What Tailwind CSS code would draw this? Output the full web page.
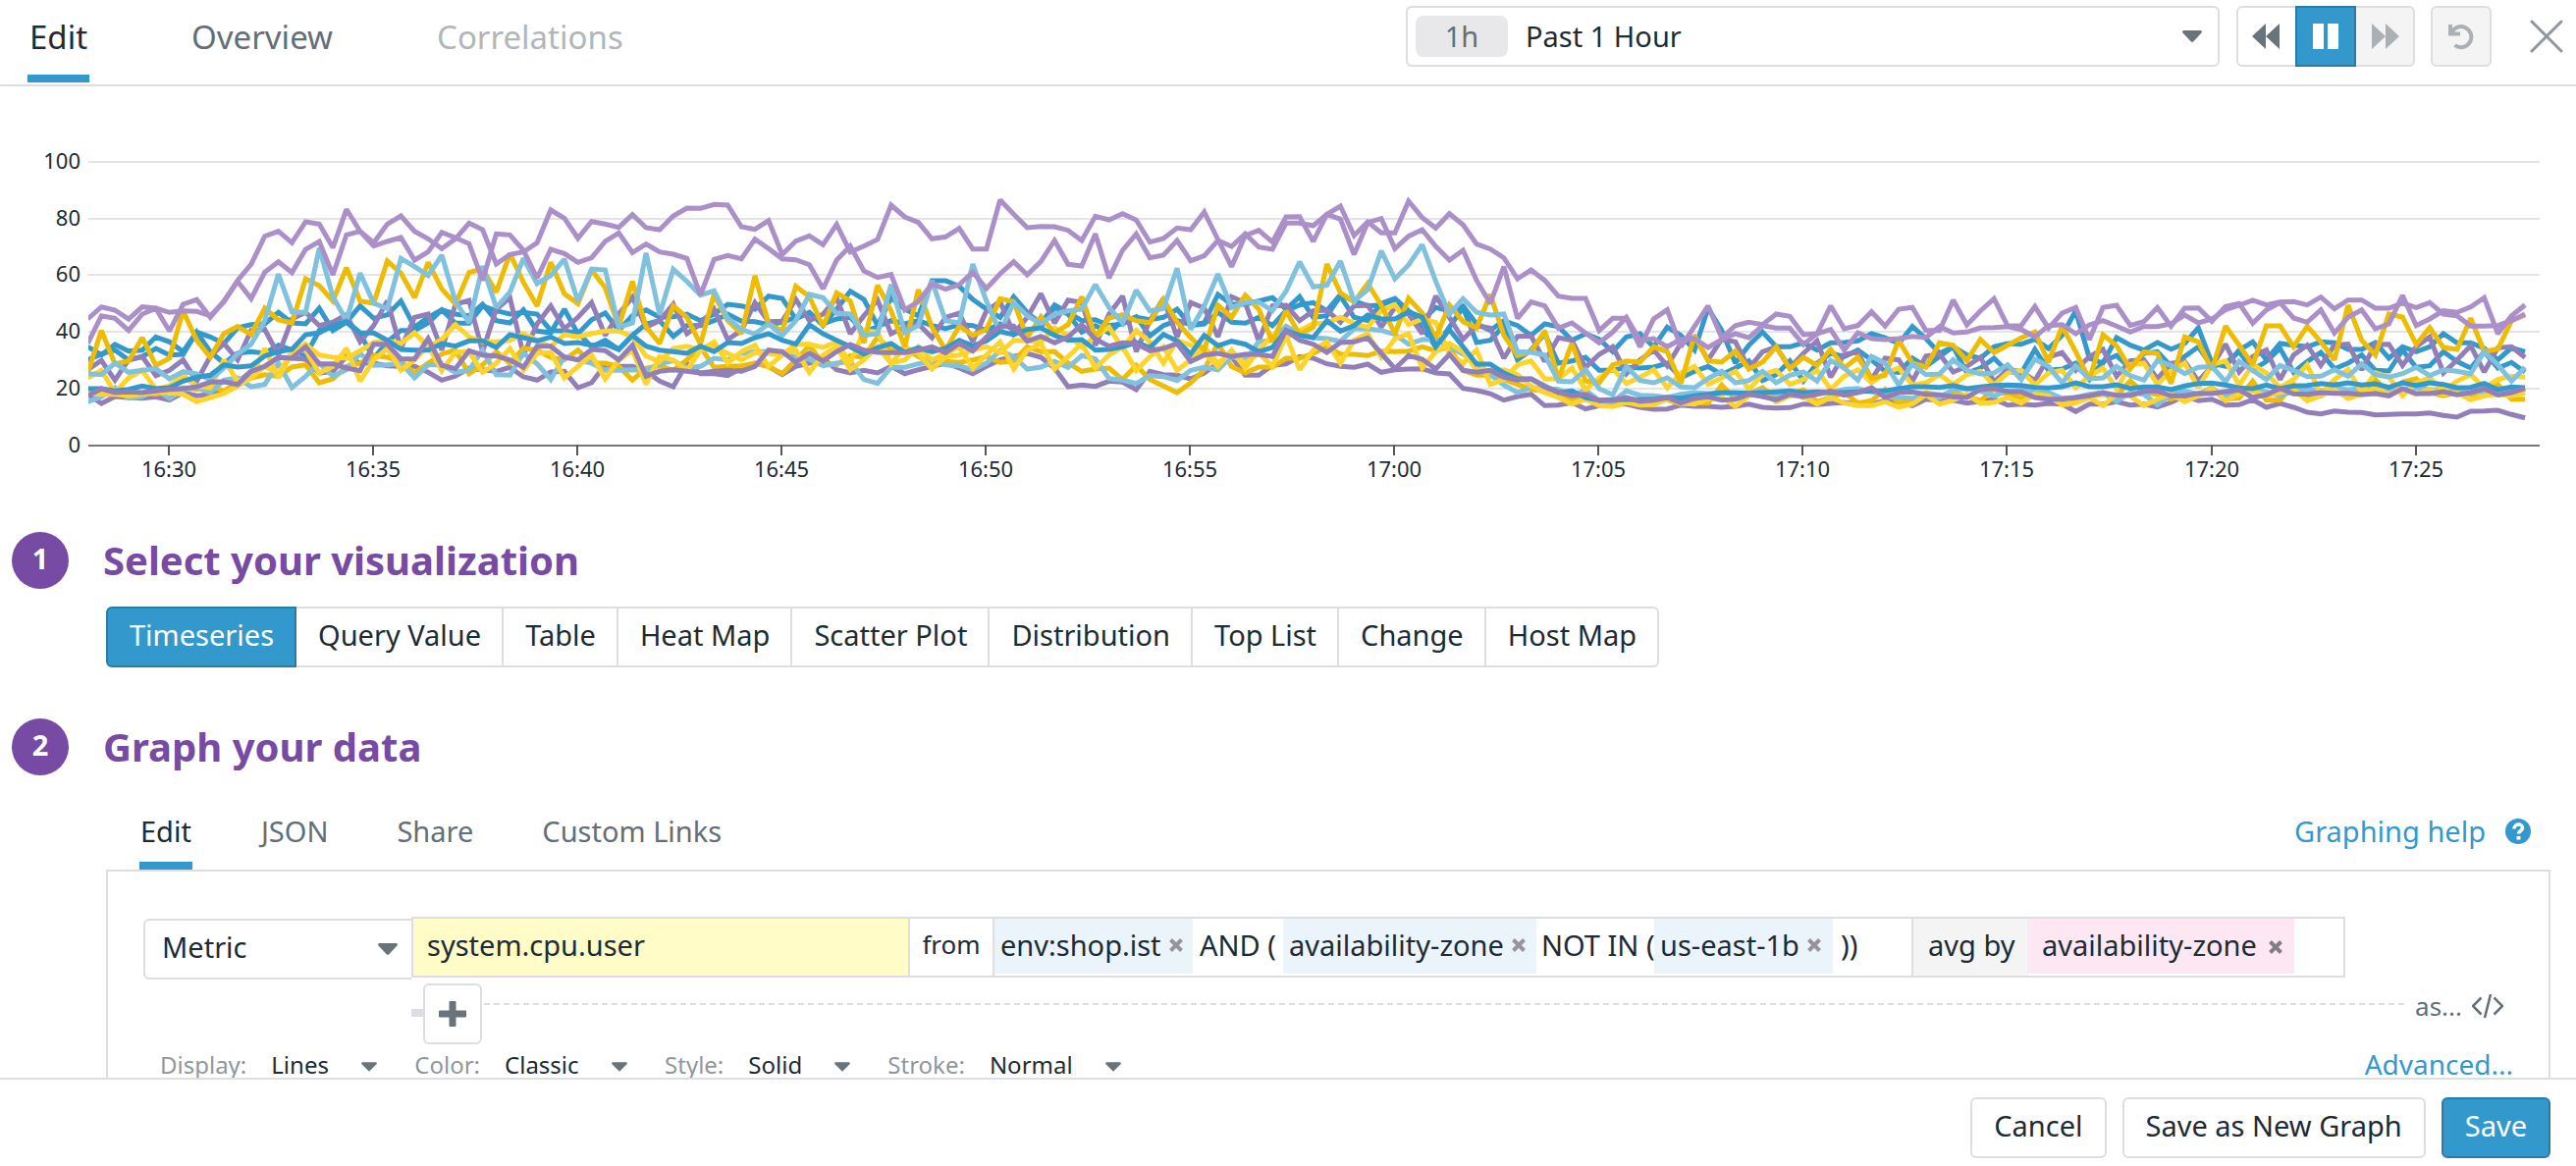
<!DOCTYPE html>
<html lang="en">
<head>
<meta charset="utf-8">
<meta name="viewport" content="width=device-width, initial-scale=1">
<title>Graph editor</title>
<script src="https://cdn.jsdelivr.net/npm/@tailwindcss/browser@4"></script>
</head>
<body class="flex h-screen flex-col overflow-hidden bg-white font-['Noto_Sans',sans-serif] text-[29px] leading-[38px] text-[#1c2b34]">

<header class="flex h-[88px] shrink-0 items-start justify-between border-b-2 border-[#dddde3] pr-[13px] pl-7">
  <nav class="flex gap-[102px] text-[33px] leading-[44px]" aria-label="Editor views">
    <a href="#edit" class="flex h-[84px] flex-col justify-end border-b-8 border-[#3399cc] px-0.5 pb-4">Edit</a>
    <a href="#overview" class="flex h-[84px] flex-col justify-end border-b-8 border-transparent px-0.5 pb-4 text-[#636e76]">Overview</a>
    <a href="#correlations" class="flex h-[84px] flex-col justify-end border-b-8 border-transparent px-0.5 pb-4 text-[#b1b6b9]">Correlations</a>
  </nav>
  <div class="flex items-center pt-1.5">
    <label class="flex h-[62px] w-[829px] items-center rounded-md border-2 border-[#dddde3] pr-4 pl-2">
      <span class="flex h-[42px] w-[94px] items-center justify-center rounded-lg bg-[#e8e8ea] text-[#636e76]">1h</span>
      <select aria-label="Time range" class="ml-[18px] flex-1 appearance-none bg-transparent"><option>Past 1 Hour</option></select>
      <svg class="h-3 w-5" viewBox="0 0 20 12" fill="#69737a"><path d="M1.500 0h17a1.500 1.500 0 0 1 1 2.500l-8 8.500a2 2 0 0 1-3 0l-8-8.500A1.500 1.500 0 0 1 1.500 0z"/></svg>
    </label>
    <div class="ml-[17px] flex h-[62px]">
      <button aria-label="Rewind" class="flex w-[60px] items-center justify-center rounded-l-md border-2 border-r-0 border-[#dddde3] pr-0.5"><svg class="h-[26px] w-7" viewBox="0 0 28 26" fill="#69737a"><path d="M14 0v26L0 13zM28 0v26L14 13z"/></svg></button>
      <button aria-label="Pause" class="flex w-[62px] items-center justify-center border-2 border-[#2a7ba6] bg-[#3399cc]"><svg class="h-[26px] w-[26px]" viewBox="0 0 26 26" fill="#fff"><path d="M0 0h11v26H0zM15 0h11v26H15z"/></svg></button>
      <button aria-label="Fast forward" disabled class="flex w-[60px] items-center justify-center rounded-r-md border-2 border-l-0 border-[#dddde3] bg-[#f4f4f5] pl-0.5"><svg class="h-[26px] w-7" viewBox="0 0 28 26" fill="#abb0b4"><path d="M0 0v26l14-13zM14 0v26l14-13z"/></svg></button>
    </div>
    <button aria-label="Reset" disabled class="ml-4 flex h-[62px] w-[62px] items-center justify-center rounded-md border-2 border-[#dddde3] bg-[#f4f4f5]"><svg class="h-7 w-7" viewBox="0 0 28 28" fill="none" stroke="#abb0b4" stroke-width="4"><path d="M3 2v9.500h10M4 11a10.500 10.500 0 1 1 3.500 12"/></svg></button>
    <button aria-label="Close" class="ml-[39px]"><svg class="h-[34px] w-[34px]" viewBox="0 0 34 34" fill="none" stroke="#8f979d" stroke-width="3" stroke-linecap="round"><path d="M2 2l30 30M32 2L2 32"/></svg></button>
  </div>
</header>

<main class="min-h-0 flex-1 overflow-hidden">
  <svg id="chart" class="block h-auto w-full" viewBox="0 88 2624 412" role="img" aria-label="system.cpu.user by availability-zone" font-size="22" fill="#1c2b34">
    <defs><clipPath id="plot"><path d="M90 100h2500v360H90z"/></clipPath></defs>
    <g id="grid" stroke-width="2"></g>
    <g id="lines" clip-path="url(#plot)" fill="none" stroke-width="5" stroke-linejoin="miter" stroke-miterlimit="2"></g>
  </svg>

  <section class="pt-[42px] pr-[26px] pl-3">
    <h2 class="flex h-[58px] items-center gap-[35px] text-[40px] font-bold text-[#774aa4]"><span class="flex h-[58px] w-[58px] items-center justify-center rounded-full bg-[#774aa4] pb-1 text-[29px] text-white">1</span>Select your visualization</h2>
    <div class="mt-[18px] ml-24 flex h-[62px] [&>button]:border-2 [&>button]:border-l-0 [&>button]:border-[#dddde3] [&>button]:pr-[21px] [&>button]:pb-1 [&>button]:pl-[22px]">
      <button class="rounded-l-md !border-l-2 !border-[#2a7ba6] bg-[#3399cc] text-white">Timeseries</button>
      <button>Query Value</button>
      <button>Table</button>
      <button>Heat Map</button>
      <button>Scatter Plot</button>
      <button>Distribution</button>
      <button>Top List</button>
      <button>Change</button>
      <button class="rounded-r-md">Host Map</button>
    </div>
  </section>

  <section class="pt-[52px] pr-[26px] pl-3">
    <h2 class="flex h-[58px] items-center gap-[35px] text-[40px] font-bold text-[#774aa4]"><span class="flex h-[58px] w-[58px] items-center justify-center rounded-full bg-[#774aa4] pb-1 text-[29px] text-white">2</span>Graph your data</h2>
    <div class="ml-24 flex h-24 items-end justify-between pr-5 pl-[34px]">
      <nav class="flex gap-[70px] text-[#636e76]" aria-label="Query views">
        <a href="#query-edit" class="border-b-8 border-[#3399cc] px-px pb-3 text-[#1c2b34]">Edit</a>
        <a href="#json">JSON</a>
        <a href="#share">Share</a>
        <a href="#custom-links">Custom Links</a>
      </nav>
      <a href="#help" class="flex items-center gap-5 pb-5 text-[#3399cc]">Graphing help
        <svg class="h-[26px] w-[26px]" viewBox="0 0 26 26"><circle cx="13" cy="13" r="13" fill="#3399cc"/><path d="M9 10.500c0-6 8.500-5.500 8.500-1 0 3-4 3-4 6" fill="none" stroke="#fff" stroke-width="3.500"/><path d="M11.500 18h4v3.500h-4z" fill="#fff"/></svg></a>
    </div>
    <div class="ml-24 h-[400px] border-2 border-[#dddde3] pt-[46px] pr-9 pl-9">
      <div class="flex items-start">
        <label class="mt-0.5 flex h-[62px] w-[273px] items-center rounded-l-md border-2 border-r-0 border-[#dddde3] pr-[14px] pb-1 pl-[17px]">
          <select aria-label="Source" class="flex-1 appearance-none bg-transparent"><option>Metric</option></select>
          <svg class="mt-1 h-3 w-5" viewBox="0 0 20 12" fill="#69737a"><path d="M1.500 0h17a1.500 1.500 0 0 1 1 2.500l-8 8.500a2 2 0 0 1-3 0l-8-8.500A1.500 1.500 0 0 1 1.500 0z"/></svg>
        </label>
        <div class="flex h-[62px] border-2 border-[#dddde3]">
          <input aria-label="Metric name" value="system.cpu.user" class="w-[504px] bg-[#fffcc8] pb-1 pl-[14px]">
          <span class="flex w-[88px] items-center justify-center border-x-2 border-[#dddde3] pb-1.5 text-[26px]">from</span>
          <div class="flex w-[936px] items-start border-r-2 border-[#dddde3] leading-[54px]">
            <span class="flex h-14 w-[202px] items-center bg-[#ebf4fb] pb-0.5 pl-1.5">env:shop.ist<button aria-label="Remove env:shop.ist" class="ml-2"><svg class="h-3.5 w-3.5" viewBox="0 0 14 14" stroke="#99949b" stroke-width="4"><path d="M1.500 1.500l11 11M12.500 1.500l-11 11"/></svg></button></span>
            <span class="w-[92px] pl-[7px]">AND (</span>
            <span class="flex h-14 w-[258px] items-center bg-[#ebf4fb] pb-0.5 pl-1.5">availability-zone<button aria-label="Remove availability-zone" class="ml-2"><svg class="h-3.5 w-3.5" viewBox="0 0 14 14" stroke="#99949b" stroke-width="4"><path d="M1.500 1.500l11 11M12.500 1.500l-11 11"/></svg></button></span>
            <span class="w-[120px] pl-[5px] whitespace-nowrap">NOT IN (</span>
            <span class="flex h-14 w-[182px] items-center bg-[#ebf4fb] pb-0.5 pl-1.5">us-east-1b<button aria-label="Remove us-east-1b" class="ml-2"><svg class="h-3.5 w-3.5" viewBox="0 0 14 14" stroke="#99949b" stroke-width="4"><path d="M1.500 1.500l11 11M12.500 1.500l-11 11"/></svg></button></span>
            <span class="pl-2">))</span>
          </div>
          <span class="w-[116px] bg-[#f4f4f5] pl-[15px] leading-[54px] whitespace-nowrap">avg by</span>
          <div class="w-[322px] leading-[54px]">
            <span class="flex h-14 w-[272px] items-center bg-[#fde7f3] pb-0.5 pl-[15px]">availability-zone<button aria-label="Remove group" class="mt-1 ml-3"><svg class="h-3.5 w-3.5" viewBox="0 0 14 14" stroke="#847c87" stroke-width="4"><path d="M1.500 1.500l11 11M12.500 1.500l-11 11"/></svg></button></span>
          </div>
        </div>
      </div>
      <div class="flex h-[66px] items-start pt-1 pr-2.5 pl-[273px]">
        <span class="mt-[26px] h-2 w-3 bg-[#dddde3]"></span>
        <button aria-label="Add to query" class="flex h-[62px] w-[60px] items-center justify-center rounded-md border-2 border-[#dddde3]"><svg class="h-[26px] w-7" viewBox="0 0 28 26" fill="#69737a"><path d="M11.500 0h5a1 1 0 0 1 1 1v8.500H27a1 1 0 0 1 1 1v5a1 1 0 0 1-1 1h-9.500V25a1 1 0 0 1-1 1h-5a1 1 0 0 1-1-1v-8.500H1a1 1 0 0 1-1-1v-5a1 1 0 0 1 1-1h9.500V1a1 1 0 0 1 1-1z"/></svg></button>
        <svg class="mt-5 h-0.5 min-w-0 flex-1"><path d="M2 1h4000" stroke="#dddde0" stroke-width="2" stroke-dasharray="6 4"/></svg>
        <a href="#as" class="mt-1 mr-2.5 ml-2.5 text-[26px] text-[#636e76]">as...</a>
        <button aria-label="Show code" class="mt-[11px]"><svg class="h-6 w-8" viewBox="0 0 32 24" fill="none" stroke="#636e76" stroke-width="2.500"><path d="M9.500 3.500L1 12l8.500 8.500M22.500 3.500L31 12l-8.500 8.500M19 0l-6 24"/></svg></button>
      </div>
      <div class="flex items-start justify-between pt-0.5 pl-[17px] text-[24px]">
        <div class="flex gap-[38px] [&_label]:flex [&_label]:items-center [&_label]:gap-[25px] [&_label]:text-[#8f979d] [&_select]:mr-2 [&_select]:appearance-none [&_select]:text-[#1c2b34]">
          <label>Display: <select><option>Lines</option></select><svg class="mt-1 h-2.5 w-4" viewBox="0 0 20 12" fill="#69737a"><path d="M1 0h18l1 2-10 10L0 2z"/></svg></label>
          <label>Color: <select><option>Classic</option></select><svg class="mt-1 h-2.5 w-4" viewBox="0 0 20 12" fill="#69737a"><path d="M1 0h18l1 2-10 10L0 2z"/></svg></label>
          <label>Style: <select><option>Solid</option></select><svg class="mt-1 h-2.5 w-4" viewBox="0 0 20 12" fill="#69737a"><path d="M1 0h18l1 2-10 10L0 2z"/></svg></label>
          <label>Stroke: <select><option>Normal</option></select><svg class="mt-1 h-2.5 w-4" viewBox="0 0 20 12" fill="#69737a"><path d="M1 0h18l1 2-10 10L0 2z"/></svg></label>
        </div>
        <a href="#advanced" class="text-[28px] leading-[36px] text-[#3399cc]">Advanced...</a>
      </div>
    </div>
  </section>
</main>

<footer class="flex h-[90px] shrink-0 items-start justify-end gap-4 border-t-2 border-[#dddde3] bg-white pt-[18px] pr-[26px] [&>button]:h-[62px] [&>button]:rounded-md [&>button]:border-2 [&>button]:border-[#dddde3] [&>button]:px-[22px] [&>button]:pb-1">
  <button>Cancel</button>
  <button>Save as New Graph</button>
  <button class="!border-[#2a7ba6] bg-[#3399cc] text-white">Save</button>
</footer>

<script>
const NS = 'http://www.w3.org/2000/svg';
function add(parent, tag, attrs, text) {
  const el = document.createElementNS(NS, tag);
  for (const k in attrs) el.setAttribute(k, attrs[k]);
  if (text) el.textContent = text;
  parent.appendChild(el);
}
const grid = document.getElementById('grid');
[100, 80, 60, 40, 20, 0].forEach((v, i) => {
  const y = Math.round(165 + i * 57.7);
  add(grid, 'path', { d: `M90 ${y}H2587`, stroke: v ? '#e4e4e4' : '#77777a' });
  add(grid, 'text', { x: 82, y: y + 7, 'text-anchor': 'end' }, String(v));
});
['16:30','16:35','16:40','16:45','16:50','16:55','17:00','17:05','17:10','17:15','17:20','17:25'].forEach((t, i) => {
  const x = Math.round(171.5 + i * 208.1);
  add(grid, 'path', { d: `M${x} 453v11`, stroke: '#55585b' });
  add(grid, 'text', { x, y: 486, 'text-anchor': 'middle' }, t);
});

// One sample every 20 seconds, stored as depth below the top of the plot in thirds of a unit.
const series = [
['#3399cc',[640,665,633,653,650,610,625,655,595,610,630,582,572,570,535,567,570,522,590,565,515,553,542,500,580,550,527,540,545,510,560,567,527,592,597,525,600,557,537,590,545,527,550,548,540,560,540,510,515,525,485,492,555,535,575,525,470,495,575,490,525,545,438,438,455,495,525,550,487,535,570,512,535,560,557,575,570,548,607,575,560,572,567,480,510,510,500,490,525,487,550,545,485,550,560,507,492,530,560,520,530,515,570,590,560,575,605,570,578,620,600,617,655,610,600,640,580,605,650,522,590,690,635,595,640,640,628,650,628,627,622,600,612,630,578,615,660,640,665,675,640,630,632,617,645,605,530,675,690,612,635,650,627,647,630,582,690,700,650,625,680,630,635,640,625,628,648,648,627,675,640,655,640,600,628,628,645,680,643,655]],
['#3399cc',[680,662,650,680,670,645,665,663,595,655,690,660,655,660,635,650,667,590,580,565,600,675,625,590,590,567,527,568,568,515,530,540,535,540,590,592,597,640,620,648,605,570,560,608,575,575,560,540,562,563,572,565,550,537,570,555,550,595,578,560,570,560,575,585,572,575,590,570,585,590,580,520,540,595,575,598,560,550,557,550,525,575,570,535,565,568,550,575,530,512,505,530,480,500,515,512,495,540,580,640,580,520,627,620,575,680,650,600,690,683,672,712,712,703,705,702,690,735,715,700,725,705,683,743,725,683,745,690,660,670,650,680,715,718,675,700,670,640,720,705,675,717,720,648,712,708,690,740,685,667,705,660,655,700,670,640,700,690,655,710,685,645,718,685,657,707,690,665,712,714,650,703,698,655,685,705,655,705,688,717]],
['#927fba',[785,813,792,795,797,793,803,780,790,785,778,750,715,700,672,675,678,720,715,670,690,690,698,700,700,718,742,730,705,710,715,703,732,742,717,715,765,750,695,700,700,715,745,762,690,722,722,728,705,690,700,725,700,690,675,710,720,712,720,700,722,710,700,690,705,722,700,680,670,660,672,705,762,757,761,745,748,771,715,725,727,738,720,690,670,727,727,697,692,670,675,692,700,703,693,718,710,708,707,720,723,767,773,783,803,792,785,820,818,810,830,820,815,815,825,831,830,818,822,822,825,822,815,825,827,826,815,817,813,810,815,815,805,810,820,800,805,803,812,807,800,818,815,818,813,815,838,815,815,808,818,815,824,810,790,805,800,818,817,802,825,813,825,840,845,836,840,841,848,847,845,845,842,850,855,837,836,834,847,857]],
['#927fba',[710,682,742,680,670,728,712,680,745,670,630,680,590,587,665,555,535,575,565,542,625,575,500,645,550,540,650,510,498,655,525,490,665,570,515,585,550,505,605,540,488,580,560,510,600,570,525,618,590,505,563,562,495,560,540,490,600,545,497,600,580,570,612,550,537,625,530,502,600,550,478,568,497,505,635,540,485,655,560,492,610,505,522,610,487,505,622,515,513,560,530,528,565,515,513,580,520,540,600,485,550,617,575,583,675,608,607,685,612,620,703,663,640,722,680,650,698,630,610,680,617,625,705,655,640,705,660,622,733,663,657,740,675,680,745,668,663,717,700,672,747,710,715,743,672,658,712,670,648,730,683,680,738,690,685,745,700,632,717,670,650,740,665,635,697,635,632,710,633,632,697,640,610,720,680,637,717,643,640,673]],
['#eebc02',[780,785,775,790,780,785,775,765,770,760,775,750,735,725,730,702,695,750,738,700,690,667,672,685,720,690,662,650,722,695,655,690,645,650,672,680,650,690,690,700,742,705,698,712,680,640,703,700,698,690,700,722,680,637,690,695,667,672,610,650,645,670,690,685,688,680,670,688,683,640,655,655,690,715,708,705,740,697,740,760,780,750,710,630,700,720,702,702,675,675,660,640,662,663,667,653,655,653,640,652,640,712,727,727,740,755,770,775,785,803,800,810,805,800,815,800,802,815,810,812,757,800,785,765,800,785,772,808,795,780,812,805,770,812,800,780,790,780,790,805,770,785,795,780,790,815,810,790,785,790,745,780,785,800,785,785,765,800,797,745,803,803,755,795,790,750,790,770,740,780,748,737,780,790,780,795,790,755,800,800]],
['#80c1de',[808,793,765,797,792,770,798,770,765,780,742,735,762,755,690,765,730,690,730,710,660,697,695,690,735,695,695,718,712,650,725,727,660,692,740,670,680,690,712,712,710,712,692,682,705,700,675,680,660,655,655,655,672,678,698,690,685,740,752,703,703,692,683,695,698,710,690,652,670,708,702,685,703,667,677,737,742,752,728,731,743,712,703,710,670,680,625,620,577,600,612,615,623,585,585,590,602,632,618,617,640,662,690,725,757,780,765,768,770,790,772,805,808,775,788,790,795,785,780,783,780,783,780,775,785,780,795,783,780,770,767,778,785,795,797,787,795,770,768,775,790,775,772,780,780,797,795,785,780,807,780,785,817,785,775,785,770,790,775,770,778,790,775,770,775,765,772,765,770,770,770,765,770,775,775,780,775,770,775,770]],
['#ffd42a',[735,712,780,735,712,770,760,728,760,765,680,745,735,645,735,660,632,665,672,675,652,627,622,630,597,640,618,572,610,625,625,620,600,620,640,603,610,600,592,592,610,668,685,645,638,650,625,690,655,635,700,665,632,632,642,625,690,590,595,692,640,660,708,670,665,650,640,658,620,622,625,582,605,640,610,580,645,590,625,690,620,635,660,700,650,705,650,605,612,590,570,567,550,568,580,530,512,572,555,565,660,690,650,755,740,695,683,738,738,705,772,735,707,752,733,710,765,720,700,755,735,715,770,725,712,755,740,712,770,730,710,750,720,705,757,750,725,755,725,715,757,720,712,757,720,712,765,730,705,770,695,690,755,715,690,765,695,683,757,695,720,765,740,695,785,740,710,780,720,732,790,750,735,775,745,725,765,740,730,733]],
['#ffd42a',[783,785,785,790,785,780,780,785,808,795,783,760,735,700,722,655,650,720,700,645,745,680,645,712,680,637,713,657,655,718,690,645,712,660,657,735,700,665,738,680,650,755,670,680,712,650,640,660,680,658,660,665,650,718,665,640,710,680,640,690,680,640,680,660,640,705,665,625,708,650,630,708,670,630,705,665,640,712,670,640,712,680,640,690,660,690,660,700,605,710,650,625,690,620,600,672,615,600,705,655,630,655,710,715,710,725,760,780,795,815,800,820,823,810,818,817,800,812,815,800,795,822,790,780,808,790,792,815,795,812,820,820,808,825,815,787,815,803,785,813,810,795,812,785,790,818,812,795,820,785,790,820,800,785,808,790,768,805,785,775,790,780,770,805,790,770,798,785,765,785,770,785,770,785,780,802,790,785,790,780]],
['#eebc02',[720,590,692,683,612,697,675,530,620,672,600,578,602,522,558,567,432,453,500,398,500,507,378,415,490,382,463,510,413,402,473,355,443,515,382,478,508,405,460,578,440,578,630,515,550,632,480,560,600,423,570,592,455,487,578,475,500,628,452,530,640,465,580,650,577,605,587,493,502,612,548,598,572,487,610,552,542,560,566,495,565,612,650,513,550,482,525,625,530,602,580,387,475,503,447,513,600,492,537,612,512,563,583,480,605,667,655,592,738,630,745,750,695,683,687,640,655,752,605,683,687,653,708,687,640,707,672,697,648,705,672,737,727,620,690,702,628,635,682,618,658,635,613,595,687,577,655,740,603,637,707,656,660,752,610,625,710,577,635,695,576,576,640,577,625,680,513,620,665,540,549,633,582,642,648,553,655,647,560,543]],
['#80c1de',[722,725,690,718,712,707,738,716,723,740,705,662,632,560,418,533,535,338,487,560,415,507,523,370,395,422,360,500,567,393,520,473,370,447,422,372,500,402,405,580,567,353,542,403,440,482,469,553,587,601,570,605,560,480,490,538,540,605,600,450,596,575,438,560,567,387,500,595,505,545,570,540,530,525,450,520,567,467,530,523,400,587,515,418,520,505,503,530,470,380,457,452,378,500,465,347,432,390,328,440,540,493,535,543,540,655,657,665,745,747,710,768,787,700,743,750,735,763,765,737,715,750,743,715,750,727,717,745,682,705,742,670,690,757,693,725,723,680,712,723,720,695,740,678,700,750,698,738,735,700,728,742,682,697,722,703,700,747,685,712,740,697,712,731,730,710,730,692,725,733,722,703,728,710,715,722,655,695,745,703]],
['#3399cc',[768,768,775,770,760,768,765,745,733,727,695,702,698,668,655,648,603,597,575,562,597,598,620,648,650,650,630,638,622,622,642,603,612,622,610,630,627,635,632,648,605,638,650,655,660,638,655,627,630,612,600,620,632,573,600,620,640,662,643,630,657,643,655,645,620,637,622,593,603,587,582,605,620,618,650,648,640,627,642,602,622,662,605,637,623,632,655,642,590,605,612,560,592,575,543,555,555,533,550,640,588,640,693,693,720,738,738,760,780,775,795,803,802,800,802,800,795,797,790,785,780,780,782,780,778,775,780,778,780,780,778,775,775,768,762,762,764,758,768,763,758,757,758,764,766,762,750,762,762,756,767,763,763,771,760,752,751,757,766,768,757,768,760,758,752,757,750,757,753,764,750,758,750,755,765,764,752,771,763,765]],
['#927fba',[790,768,780,778,780,775,770,768,762,748,747,755,715,700,673,675,640,692,692,705,713,632,632,677,677,615,697,707,652,665,668,680,703,638,638,672,680,648,652,680,635,730,715,710,715,720,715,712,715,700,650,655,687,660,683,655,633,650,657,658,658,650,640,658,630,653,610,577,577,623,608,628,610,572,617,638,628,630,652,645,630,685,665,660,670,663,663,670,590,620,632,657,627,625,613,660,707,667,678,708,663,712,718,712,733,742,738,762,778,790,785,805,803,795,807,803,795,812,798,793,803,800,785,792,802,785,792,785,775,788,780,765,795,780,778,785,787,793,795,770,767,777,778,795,800,800,795,790,780,788,788,777,775,790,790,782,783,777,772,795,787,767,784,785,780,782,782,786,783,790,768,783,783,777,787,780,768,787,780,767]],
['#ab8fc9',[630,545,553,590,540,523,592,510,496,550,500,440,493,412,380,413,342,318,420,298,287,332,318,306,375,350,290,307,325,437,295,298,345,430,342,355,382,368,318,292,352,326,350,357,370,482,373,361,371,311,340,371,374,389,463,375,332,408,428,419,527,502,448,464,450,412,462,417,380,420,379,315,388,393,295,430,345,295,368,360,315,377,362,315,333,295,335,342,262,262,270,235,250,358,260,248,340,302,282,333,375,345,437,508,395,553,503,515,583,567,598,628,595,550,620,615,640,617,615,642,618,600,612,575,583,583,633,600,587,650,597,615,618,615,608,612,578,598,595,582,581,578,587,610,575,572,600,573,560,577,595,578,578,570,543,567,555,527,513,498,512,503,502,512,488,524,497,497,522,522,507,520,505,540,545,577,577,575,560,540]],
['#ab8fc9',[555,518,528,555,518,522,535,530,532,545,503,437,388,302,287,322,258,265,337,220,287,322,265,240,287,310,340,310,262,282,387,358,350,322,222,247,308,257,265,275,236,276,282,240,216,217,205,207,273,281,254,358,317,301,328,266,350,332,312,207,243,260,310,304,278,341,341,191,235,276,272,273,284,315,241,252,233,253,320,309,277,282,228,312,395,300,284,320,243,242,318,235,210,300,258,292,292,195,245,277,233,267,326,341,368,432,405,437,485,492,492,590,553,553,640,555,527,640,578,515,612,575,565,572,540,547,603,600,515,585,575,533,577,525,520,590,590,497,573,530,493,577,575,517,583,537,520,618,520,513,575,563,520,577,522,521,562,517,508,568,527,505,552,565,527,598,550,527,585,570,483,575,555,530,535,518,490,600,545,512]],
];
const lines = document.getElementById('lines');
for (const [stroke, samples] of series) {
  const points = samples.map((s, i) => `${(89.4 + i * 13.87).toFixed(1)},${(140 + s / 3).toFixed(1)}`).join(' ');
  add(lines, 'polyline', { points, stroke });
}
</script>
</body>
</html>
